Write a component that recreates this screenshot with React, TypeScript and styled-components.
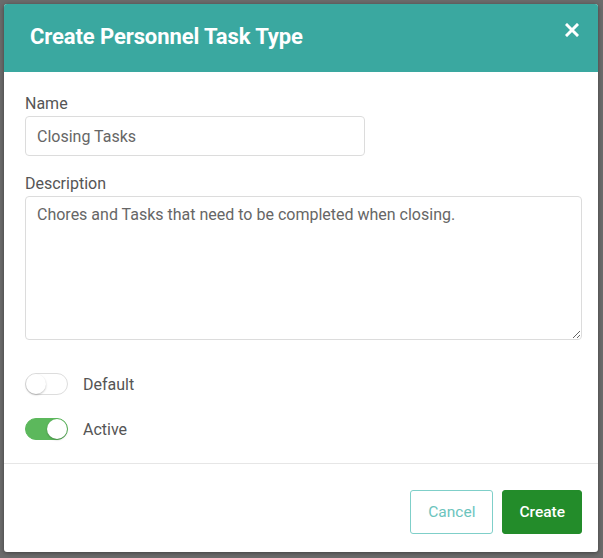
import React, { useState } from "react";
import styled, { createGlobalStyle } from "styled-components";

const GlobalStyle = createGlobalStyle`
  html, body {
    margin: 0;
    padding: 0;
    background: #6b6b6b;
    font-family: Roboto, "Liberation Sans", Arial, sans-serif;
  }
  * { box-sizing: border-box; }
`;

const Backdrop = styled.div`
  width: 603px;
  height: 558px;
  padding: 4px 5px 6px 4px;
`;

const Modal = styled.div`
  width: 100%;
  height: 100%;
  background: #ffffff;
  border-radius: 3px;
  overflow: hidden;
  display: flex;
  flex-direction: column;
  box-shadow: 0 1px 4px rgba(0, 0, 0, 0.4);
`;

const Header = styled.div`
  height: 68px;
  flex-shrink: 0;
  background: #3aa8a0;
  display: flex;
  align-items: center;
  justify-content: space-between;
  padding: 0 19px 4px 26px;
`;

const Title = styled.h2`
  margin: 0;
  color: #ffffff;
  font-size: 22px;
  font-weight: 700;
  letter-spacing: -0.1px;
`;

const CloseBtn = styled.button`
  border: none;
  background: none;
  padding: 0;
  margin-top: -12px;
  cursor: pointer;
  display: flex;
`;

const Body = styled.div`
  padding: 22px 17px 0 21px;
  height: 392px;
  display: flex;
  flex-direction: column;
  border-bottom: 1px solid #e6e6e6;
`;

const Label = styled.label`
  display: block;
  font-size: 16px;
  line-height: 19px;
  color: #555555;
  margin-bottom: 3px;
`;

const Field = styled.div`
  margin-bottom: 18px;
`;

const TextInput = styled.input`
  width: 340px;
  height: 40px;
  border: 1px solid #dcdcdc;
  border-radius: 4px;
  padding: 0 11px;
  font-family: inherit;
  font-size: 16px;
  color: #666666;
  outline: none;
`;

const TextArea = styled.textarea`
  display: block;
  width: 557px;
  height: 144px;
  border: 1px solid #dcdcdc;
  border-radius: 4px;
  padding: 8px 11px;
  font-family: inherit;
  font-size: 16px;
  color: #666666;
  outline: none;
  resize: vertical;
`;

const ToggleRow = styled.div`
  display: flex;
  align-items: center;
  gap: 15px;
  margin-bottom: 23px;
`;

const Track = styled.button<{ $on: boolean }>`
  width: 43px;
  height: 22px;
  border-radius: 11px;
  padding: 0;
  position: relative;
  cursor: pointer;
  border: 1px solid ${(p) => (p.$on ? "#5cb85c" : "#dddddd")};
  background: ${(p) => (p.$on ? "#5cb85c" : "#ffffff")};
`;

const Knob = styled.span<{ $on: boolean }>`
  position: absolute;
  top: 0;
  left: ${(p) => (p.$on ? "21px" : "0")};
  width: 20px;
  height: 20px;
  border-radius: 50%;
  background: #ffffff;
  box-shadow: 0 1px 2px rgba(0, 0, 0, 0.25);
`;

const ToggleLabel = styled.span`
  font-size: 16px;
  color: #555555;
`;

const Footer = styled.div`
  flex: 1;
  display: flex;
  justify-content: flex-end;
  align-items: flex-start;
  gap: 9px;
  padding: 26px 16px 0 0;
`;

const Button = styled.button<{ $primary?: boolean }>`
  height: 44px;
  padding: 0 ${(p) => (p.$primary ? "16px" : "17px")};
  border-radius: 3px;
  font-family: inherit;
  font-size: 15.5px;
  cursor: pointer;
  border: 1px solid ${(p) => (p.$primary ? "#238c2a" : "#7fcfc9")};
  background: ${(p) => (p.$primary ? "#238c2a" : "#ffffff")};
  color: ${(p) => (p.$primary ? "#ffffff" : "#6cc4bd")};
  font-weight: ${(p) => (p.$primary ? 500 : 400)};
`;

const Spacer = styled.div`
  height: 18px;
`;

const Toggle = ({ on, label, onClick }: { on: boolean; label: string; onClick: () => void }) => (
  <ToggleRow>
    <Track $on={on} onClick={onClick}>
      <Knob $on={on} />
    </Track>
    <ToggleLabel>{label}</ToggleLabel>
  </ToggleRow>
);

const App = () => {
  const [isDefault, setDefault] = useState(false);
  const [active, setActive] = useState(true);

  return (
    <>
      <GlobalStyle />
      <Backdrop>
        <Modal>
          <Header>
            <Title>Create Personnel Task Type</Title>
            <CloseBtn aria-label="close">
              <svg width="14" height="14" viewBox="0 0 14 14">
                <path d="M2 2 L12 12 M12 2 L2 12" stroke="#fff" strokeWidth="3" strokeLinecap="square" />
              </svg>
            </CloseBtn>
          </Header>
          <Body>
            <Field>
              <Label>Name</Label>
              <TextInput defaultValue="Closing Tasks" />
            </Field>
            <Field>
              <Label>Description</Label>
              <TextArea defaultValue="Chores and Tasks that need to be completed when closing." />
            </Field>
            <Spacer />
            <Toggle on={isDefault} label="Default" onClick={() => setDefault(!isDefault)} />
            <Toggle on={active} label="Active" onClick={() => setActive(!active)} />
          </Body>
          <Footer>
            <Button>Cancel</Button>
            <Button $primary>Create</Button>
          </Footer>
        </Modal>
      </Backdrop>
    </>
  );
};

export default App;
